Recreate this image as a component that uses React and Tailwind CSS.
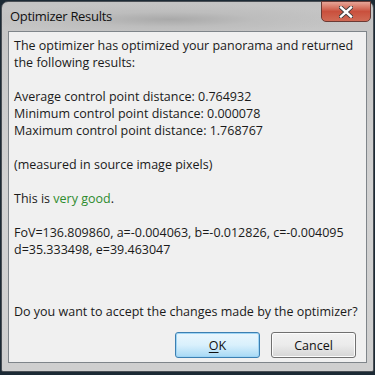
export default function App() {
  const font = { fontFamily: '"Open Sans", "Noto Sans", sans-serif' };
  return (
    <div className="w-[375px] h-[375px] bg-[#1c2a35] overflow-hidden relative" style={font}>
      <div className="ml-[1px] mt-[1px] w-[373px] h-[371px] rounded-t-[7px] rounded-b-[2px] border border-[#4a4f55] bg-gradient-to-b from-[#c4c4c4] via-[#d2d2d2] to-[#cfcfcf] flex flex-col relative">
        {/* title bar */}
        <div className="h-[29px] flex items-center pl-[8px] relative">
          <div className="absolute inset-0 rounded-t-[7px] bg-[radial-gradient(ellipse_at_45%_60%,#a9a9a9_0%,#bdbdbd_30%,transparent_65%)]" />
          <span className="relative text-[13px] text-[#111] tracking-[-0.3px]">Optimizer Results</span>
          <div className="absolute right-[2px] top-[-1px] w-[50px] h-[21px] rounded-b-[5px] border border-[#6b3a34] bg-gradient-to-b from-[#e6a597] via-[#c9503d] to-[#d06a55] flex items-center justify-center">
            <svg width="14" height="12" viewBox="0 0 14 12">
              <path d="M2 1.5 L12 10.5 M12 1.5 L2 10.5" stroke="#3a3a3a" strokeWidth="4.2" strokeLinecap="square" />
              <path d="M2 1.5 L12 10.5 M12 1.5 L2 10.5" stroke="#ffffff" strokeWidth="2.4" strokeLinecap="square" />
            </svg>
          </div>
        </div>
        {/* client */}
        <div className="mx-[6px] mb-[8px] flex-1 border border-[#7f858a] bg-[#f0f0f0] flex flex-col pl-[5px] pr-[2px] pt-[5px] pb-[4px] text-[12.5px] leading-[17px] text-[#1a1a1a] whitespace-nowrap">
          <div>The optimizer has optimized your panorama and returned</div>
          <div>the following results:</div>
          <div className="h-[17px]" />
          <div>Average control point distance: 0.764932</div>
          <div>Minimum control point distance: 0.000078</div>
          <div>Maximum control point distance: 1.768767</div>
          <div className="h-[17px]" />
          <div>(measured in source image pixels)</div>
          <div className="h-[17px]" />
          <div>This is <span className="text-[#2e8b2e]">very good</span>.</div>
          <div className="h-[17px]" />
          <div>FoV=136.809860, a=-0.004063, b=-0.012826, c=-0.004095</div>
          <div>d=35.333498, e=39.463047</div>
          <div className="mt-auto">Do you want to accept the changes made by the optimizer?</div>
          <div className="mt-[12px] flex justify-end gap-[11px] pr-[8px]">
            <button className="w-[85px] h-[26px] rounded-[3px] border border-[#3c7fb1] bg-gradient-to-b from-[#eaf6fd] via-[#d9f0fc] to-[#a7d9f5] shadow-[inset_0_0_0_1px_#9fd5f5] text-[12.5px] text-[#111]">
              <span className="underline underline-offset-2">O</span>K
            </button>
            <button className="w-[85px] h-[26px] rounded-[3px] border border-[#707070] bg-gradient-to-b from-[#f2f2f2] via-[#ebebeb] to-[#d5d5d5] shadow-[inset_0_0_0_1px_#fcfcfc] text-[12.5px] text-[#111]">
              Cancel
            </button>
          </div>
        </div>
      </div>
    </div>
  );
}
